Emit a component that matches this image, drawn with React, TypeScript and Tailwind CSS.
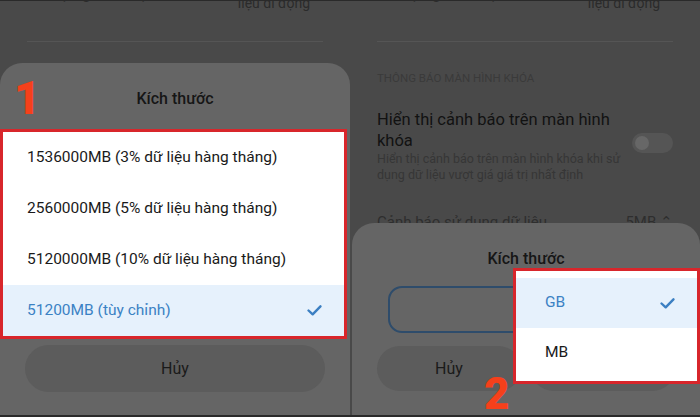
import React from "react";

const Check = ({ className = "" }: { className?: string }) => (
  <svg viewBox="0 0 16 12" className={className} fill="none">
    <polyline
      points="1.5,6 6,10.2 14.5,1.5"
      stroke="#3b7fc2"
      strokeWidth="2.6"
      strokeLinecap="round"
      strokeLinejoin="round"
    />
  </svg>
);

function TopCut() {
  return (
    <>
      {/* partially visible previous row */}
      <div className="flex justify-between items-start h-[16px] -mt-[12px] pl-[20px] pr-[40px] text-[#2b2b2b]">
        <span className="text-[16px] leading-[16px] -mt-[3px]">Giới hạn gói dữ liệu</span>
        <span className="text-[14px] leading-[14px] mt-[7px]">liệu di động</span>
      </div>
      <div className="mt-[36px] mx-[27px] h-px bg-[#555555]" />
    </>
  );
}

function LeftPanel() {
  const items = [
    "1536000MB (3% dữ liệu hàng tháng)",
    "2560000MB (5% dữ liệu hàng tháng)",
    "5120000MB (10% dữ liệu hàng tháng)",
  ];
  return (
    <div className="w-[350px] h-full flex flex-col">
      <div className="h-[62px] shrink-0 overflow-hidden">
        <TopCut />
      </div>

      <div className="relative flex-1 rounded-t-[22px] bg-[#656565] flex flex-col">
        {/* annotation */}
        <span className="absolute left-[14px] top-[12px] text-[46px] leading-none font-black text-[#f5401b]">
          1
        </span>

        <div className="pt-[26px] text-center text-[16px] leading-[20px] font-medium text-[#161616]">
          Kích thước
        </div>

        <div className="mt-[20px] w-[347px] border-[3px] border-[#d8262b] bg-white">
          {items.map((t) => (
            <div
              key={t}
              className="h-[51px] flex items-center pl-[24px] text-[15.5px] text-[#1a1a1a]"
            >
              {t}
            </div>
          ))}
          <div className="h-[51px] flex items-center justify-between pl-[24px] pr-[22px] bg-[#e6f1fc] text-[15.5px] text-[#3b82c4]">
            <span>51200MB (tùy chỉnh)</span>
            <Check className="w-[15px] h-[11px]" />
          </div>
        </div>

        <div className="px-[25px] mt-[6px]">
          <div className="h-[47px] rounded-full bg-[#5c5c5c] flex items-center justify-center text-[16px] text-[#1a1a1a]">
            Hủy
          </div>
        </div>
      </div>
    </div>
  );
}

function RightPanel() {
  return (
    <div className="relative w-[350px] h-full flex flex-col">
      <div className="h-[222px] shrink-0 overflow-hidden">
        <TopCut />
        <div className="px-[27px]">
          <div className="mt-[29px] text-[11.5px] leading-[14px] text-[#3a3a3a]">
            THÔNG BÁO MÀN HÌNH KHÓA
          </div>
          <div className="mt-[24px] flex justify-between items-start">
            <div>
              <div className="w-[245px] text-[16.5px] leading-[21px] text-[#121212]">
                Hiển thị cảnh báo trên màn hình khóa
              </div>
              <div className="w-[250px] text-[12.5px] leading-[16px] text-[#363636]">
                Hiển thị cảnh báo trên màn hình khóa khi sử dụng dữ liệu vượt giá giá trị nhất định
              </div>
            </div>
            <div className="mt-[24px] w-[41px] h-[20px] rounded-full bg-[#555555] flex items-center px-[3px]">
              <div className="w-[14px] h-[14px] rounded-full bg-[#676767]" />
            </div>
          </div>
          <div className="mt-[29px] flex justify-between text-[15px] leading-[20px] text-[#2e2e2e]">
            <span>Cảnh báo sử dụng dữ liệu</span>
            <span>5MB ⌃</span>
          </div>
        </div>
      </div>

      <div className="flex-1 ml-[2px] rounded-t-[22px] bg-[#656565] flex flex-col px-[25px]">
        <div className="pt-[26px] text-center text-[16px] leading-[20px] font-medium text-[#161616]">
          Kích thước
        </div>
        <div className="mt-[17px] mx-[11px] h-[47px] rounded-[14px] border-2 border-[#2e4c6b]" />
        <div className="mt-[13px] flex gap-[10px]">
          <div className="flex-1 h-[45px] rounded-full bg-[#5c5c5c] flex items-center justify-center text-[16px] text-[#1a1a1a]">
            Hủy
          </div>
          <div className="flex-1 h-[45px] rounded-full bg-[#5c5c5c] flex items-center justify-center text-[16px] text-[#1a1a1a]">
            OK
          </div>
        </div>
      </div>

      {/* unit dropdown */}
      <div className="absolute left-[163px] top-[267px] w-[187px] border-[3px] border-[#d8262b] bg-white pt-[7px] pb-[3px]">
        <div className="h-[50px] flex items-center justify-between pl-[29px] pr-[22px] bg-[#e6f1fc] text-[15.5px] text-[#3b82c4]">
          <span>GB</span>
          <Check className="w-[15px] h-[11px]" />
        </div>
        <div className="h-[50px] flex items-center pl-[29px] text-[15.5px] text-[#1a1a1a]">
          MB
        </div>
      </div>

      {/* annotation */}
      <span className="absolute left-[134px] top-[371px] text-[44px] leading-none font-black text-[#f5401b]">
        2
      </span>
    </div>
  );
}

export default function App() {
  return (
    <div
      className="w-[700px] h-[417px] flex bg-[#494949] overflow-hidden border-t border-b-2 border-[#2a2a2a]"
      style={{ fontFamily: "Roboto, 'Noto Sans', sans-serif" }}
    >
      <LeftPanel />
      <RightPanel />
    </div>
  );
}
